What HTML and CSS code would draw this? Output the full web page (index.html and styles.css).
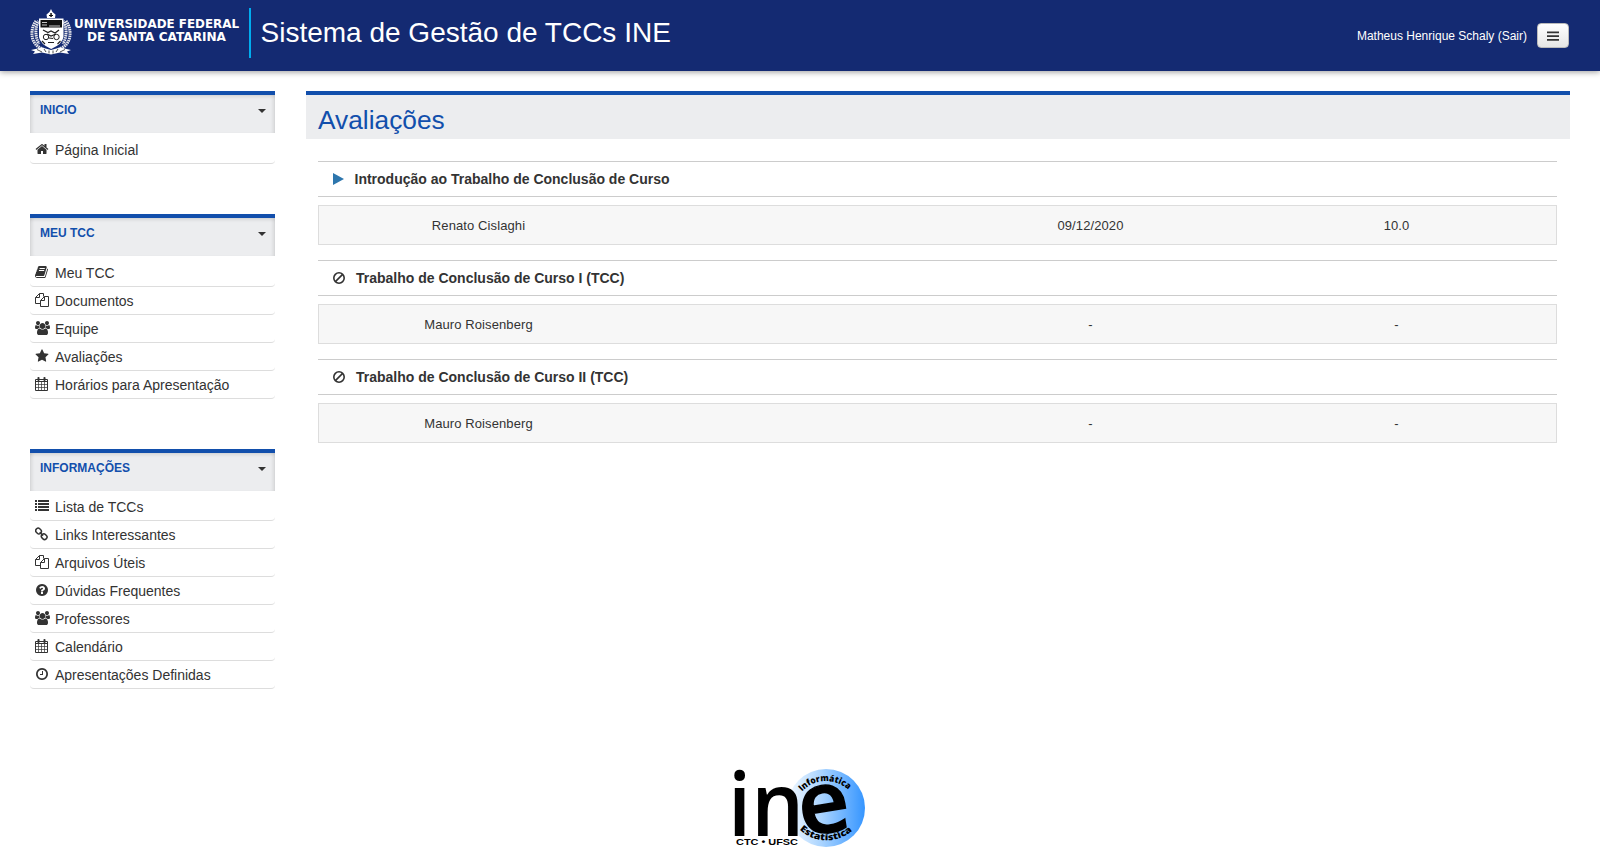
FILE: index.html
```html
<!DOCTYPE html>
<html lang="pt-BR">
<head>
<meta charset="utf-8">
<title>Sistema de Gestão de TCCs INE</title>
<link rel="stylesheet" href="styles.css">
</head>
<body>
<svg class="sprite" width="0" height="0" aria-hidden="true">
  <symbol id="home" viewBox="0 0 1792 1792"><path d="M1472 992v480q0 26-19 45t-45 19h-384v-384h-256v384h-384q-26 0-45-19t-19-45v-480q0-1 .5-3t.5-3l575-474 575 474q1 2 1 6zm223-69l-62 74q-8 9-21 11h-3q-13 0-21-7l-692-577-692 577q-12 8-24 7-13-2-21-11l-62-74q-8-10-7-23.5t11-21.5l719-599q32-26 76-26t76 26l244 204v-195q0-14 9-23t23-9h192q14 0 23 9t9 23v408l219 182q10 8 11 21.5t-7 23.5z"/></symbol>
  <symbol id="book" viewBox="0 0 1792 1792"><path d="M1639 478q40 57 18 129l-275 906q-19 64-76.5 107.5t-122.5 43.5h-923q-77 0-148.5-53.5t-99.5-131.5q-24-67-2-127 0-4 3-27t4-37q1-8-3-21.5t-3-19.5q2-11 8-21t16.5-23.5 16.5-23.5q23-38 45-91.5t30-91.5q3-10 .5-30t-.5-28q3-11 17-28t17-23q21-36 42-92t25-90q1-9-2.5-32t.5-28q4-13 22-30.5t22-22.5q19-26 42.5-84.5t27.5-96.5q1-8-3-25.5t-2-26.5q2-8 9-18t18-23 17-21q8-12 16.5-30.5t15-35 16-36 19.5-32 26.5-23.5 36-11.5 47.5 5.5l-1 3q38-9 51-9h761q74 0 114 56t18 130l-274 906q-36 119-71.5 153.5t-128.5 34.5h-869q-27 0-38 15-11 16-1 43 24 70 144 70h923q29 0 56-15.5t35-41.5l300-987q7-22 5-57 38 15 59 43zm-1064 2q-4 13 2 22.5t20 9.5h608q13 0 25.5-9.5t16.5-22.5l21-64q4-13-2-22.5t-20-9.5h-608q-13 0-25.5 9.5t-16.5 22.5zm-83 256q-4 13 2 22.5t20 9.5h608q13 0 25.5-9.5t16.5-22.5l21-64q4-13-2-22.5t-20-9.5h-608q-13 0-25.5 9.5t-16.5 22.5z"/></symbol>
  <symbol id="files" viewBox="0 0 14 14"><path fill="none" stroke="currentColor" d="M5.5 10.5h-5v-6l4-4h4v3M4.500.5v4h-4M9.500 3.500h4v10h-8v-6zM9.500 3.500v4h-4"/></symbol>
  <symbol id="group" viewBox="0 0 1920 1792"><path d="M593 896q-162 5-265 128h-134q-82 0-138-40.500t-56-118.500q0-353 124-353 6 0 43.500 21t97.500 42.500 119 21.500q67 0 133-23-5 37-5 66 0 139 81 256zm1071 637q0 120-73 189.500t-194 69.500h-874q-121 0-194-69.500t-73-189.500q0-53 3.500-103.500t14-109 26.500-108.500 43-97.500 62-81 85.500-53.500 111.500-20q10 0 43 21.500t73 48 107 48 135 21.500 135-21.500 107-48 73-48 43-21.500q61 0 111.500 20t85.500 53.500 62 81 43 97.500 26.500 108.500 14 109 3.500 103.500zm-1024-1277q0 106-75 181t-181 75-181-75-75-181 75-181 181-75 181 75 75 181zm704 384q0 159-112.500 271.500t-271.500 112.500-271.500-112.500-112.500-271.500 112.500-271.500 271.500-112.500 271.500 112.500 112.500 271.500zm576 225q0 78-56 118.500t-138 40.500h-134q-103-123-265-128 81-117 81-256 0-29-5-66 66 23 133 23 59 0 119-21.500t97.500-42.500 43.500-21q124 0 124 353zm-128-609q0 106-75 181t-181 75-181-75-75-181 75-181 181-75 181 75 75 181z"/></symbol>
  <symbol id="star" viewBox="0 0 1792 1792"><path d="M1728 647q0 22-26 48l-363 354 86 500q1 7 1 20 0 21-10.500 35.500t-30.500 14.500q-19 0-40-12l-449-236-449 236q-22 12-40 12-21 0-31.500-14.500t-10.500-35.500q0-6 2-20l86-500-364-354q-25-27-25-48 0-37 56-46l502-73 225-455q19-41 49-41t49 41l225 455 502 73q56 9 56 46z"/></symbol>
  <symbol id="calendar" viewBox="0 0 14 14"><path fill="none" stroke="currentColor" d="M.5 2.500h12v11h-12zM.5 4.500h12"/><path fill="none" stroke="currentColor" stroke-width=".7" d="M.5 7.500h12M.5 10.500h12M3.500 5v9M6.500 5v9M9.500 5v9"/><rect x="2.500" width="2" height="4" rx=".8"/><rect x="8.500" width="2" height="4" rx=".8"/></symbol>
  <symbol id="list" viewBox="0 0 14 14"><path d="M0 1h2v2H0zM0 4h2v2H0zM0 7h2v2H0zM0 10h2v2H0zM3 1h11v2H3zM3 4h11v2H3zM3 7h11v2H3zM3 10h11v2H3z"/></symbol>
  <symbol id="link" viewBox="0 0 14 14"><g fill="none" stroke="currentColor" stroke-width="1.500" transform="rotate(45 6.500 7)"><rect x="-.6" y="4.600" width="5.800" height="4.800" rx="2.200"/><rect x="7.400" y="4.600" width="5.800" height="4.800" rx="2.200"/><path d="M4 7h4.800"/></g></symbol>
  <symbol id="question" viewBox="0 0 1792 1792"><path d="M1024 1376v-192q0-14-9-23t-23-9h-192q-14 0-23 9t-9 23v192q0 14 9 23t23 9h192q14 0 23-9t9-23zm256-672q0-88-55.500-163t-138.500-116-170-41q-243 0-371 213-15 24 8 42l132 100q7 6 19 6 16 0 25-12 53-68 86-92 34-24 86-24 48 0 85.500 26t37.500 59q0 38-20 61t-68 45q-63 28-115.500 86.500t-52.500 125.500v36q0 14 9 23t23 9h192q14 0 23-9t9-23q0-19 21.500-49.500t54.500-49.500q32-18 49-28.500t46-35 44.500-48 28-60.500 12.500-81zm384 192q0 209-103 385.500t-279.500 279.500-385.500 103-385.500-103-279.500-279.500-103-385.500 103-385.500 279.500-279.500 385.500-103 385.500 103 279.500 279.500 103 385.500z"/></symbol>
  <symbol id="clock" viewBox="0 0 1792 1792"><path d="M1024 544v448q0 14-9 23t-23 9h-320q-14 0-23-9t-9-23v-64q0-14 9-23t23-9h224v-352q0-14 9-23t23-9h64q14 0 23 9t9 23zm416 352q0-148-73-273t-198-198-273-73-273 73-198 198-73 273 73 273 198 198 273 73 273-73 198-198 73-273zm224 0q0 209-103 385.500t-279.500 279.500-385.500 103-385.500-103-279.500-279.500-103-385.500 103-385.500 279.500-279.500 385.500-103 385.500 103 279.500 279.500 103 385.500z"/></symbol>
  <symbol id="ban" viewBox="0 0 12 12"><g fill="none" stroke="currentColor" stroke-width="1.600"><circle cx="6" cy="6" r="5.200"/><path d="M2.400 9.600l7.200-7.200"/></g></symbol>
</svg>

<header class="topbar">
  <svg class="crest" width="42" height="46" viewBox="0 0 42 46">
    <g fill="none" stroke="#e8e8ec" stroke-dasharray="1.500 .7">
      <path stroke-width="3" d="M6 12C1 18 1 28 4 33s6 6 9 7M36 12c5 6 5 16 2 21s-6 6-9 7"/>
      <path stroke-width="3" stroke-dashoffset="1" d="M8.500 12C5 18 5 28 9 35M33.500 12c3.500 6 3.500 16-.5 23"/>
    </g>
    <path fill="#fff" d="M21 0l1.500 3 3 2.500L25 9h-8l-.5-3.500 3-2.500zM9 9.500h24.500V28q-1 7-12.300 12Q10 35 9 28zM1 41l11-2.500 9 2.500 9-2.500L41 41l-4 1.500 2 2.500-9-1.500-9 2-9-2L3 45l2-2.500z"/>
    <path fill="#111" d="M20.300 4h1.500v4h-1.500zM19 6h4v1h-4zM10.500 11H32v7.500H10.500z"/>
    <path fill="none" stroke="#ddd" stroke-width=".9" d="M12 13.500h5M12 16h5M19 17h11"/>
    <g fill="none" stroke="#222">
      <path stroke-width="1.300" d="M13 21l5 2.500 3-1.500 4 2 4-3"/>
      <circle cx="16" cy="28" r="2.700"/><circle cx="26.500" cy="28" r="2.700"/>
      <path stroke-width="1.200" d="M17 25l4 2 5-2M19 29l4 .5M18 33.500h6M12 32l3 3M30.500 32l-3 3"/>
      <path stroke-width=".8" d="M7 40.500l5 2.500M14 40l2 3M19 41.500v3M23 41.500v3M28 40l-2 3M35 40.500L30 43"/>
    </g>
  </svg>
  <svg class="university" width="166" height="32" viewBox="0 0 166 32">
    <text x="0" y="14" textLength="165" lengthAdjust="spacingAndGlyphs">UNIVERSIDADE FEDERAL</text>
    <text x="13" y="26.500" textLength="139" lengthAdjust="spacingAndGlyphs">DE SANTA CATARINA</text>
  </svg>
  <h1 class="system">Sistema de Gestão de TCCs INE</h1>
  <a class="user">Matheus Henrique Schaly (Sair)</a>
  <button class="menu-button" aria-label="Menu"><svg width="12" height="10" viewBox="0 0 12 10"><path d="M0 .5h12v1.700H0zM0 4.200h12v1.700H0zM0 8h12v1.700H0z"/></svg></button>
</header>

<div class="page">
  <nav class="sidebar">
    <section class="box">
      <h2 class="box-title">INICIO<i class="caret"></i></h2>
      <ul class="links">
        <li><svg class="icon"><use href="#home"/></svg>Página Inicial</li>
      </ul>
    </section>
    <section class="box">
      <h2 class="box-title">MEU TCC<i class="caret"></i></h2>
      <ul class="links">
        <li><svg class="icon"><use href="#book"/></svg>Meu TCC</li>
        <li><svg class="icon"><use href="#files"/></svg>Documentos</li>
        <li><svg class="icon wide"><use href="#group"/></svg>Equipe</li>
        <li><svg class="icon"><use href="#star"/></svg>Avaliações</li>
        <li><svg class="icon"><use href="#calendar"/></svg>Horários para Apresentação</li>
      </ul>
    </section>
    <section class="box">
      <h2 class="box-title">INFORMAÇÕES<i class="caret"></i></h2>
      <ul class="links tight">
        <li><svg class="icon"><use href="#list"/></svg>Lista de TCCs</li>
        <li><svg class="icon"><use href="#link"/></svg>Links Interessantes</li>
        <li><svg class="icon"><use href="#files"/></svg>Arquivos Úteis</li>
        <li><svg class="icon"><use href="#question"/></svg>Dúvidas Frequentes</li>
        <li><svg class="icon wide"><use href="#group"/></svg>Professores</li>
        <li><svg class="icon"><use href="#calendar"/></svg>Calendário</li>
        <li><svg class="icon"><use href="#clock"/></svg>Apresentações Definidas</li>
      </ul>
    </section>
  </nav>

  <main class="content">
    <h2 class="content-title">Avaliações</h2>
    <div class="stages">
      <section class="stage">
        <h3 class="stage-title"><svg class="play" width="11" height="12" viewBox="0 0 11 12"><path d="M0 0l11 6-11 6z"/></svg>Introdução ao Trabalho de Conclusão de Curso</h3>
        <div class="grade"><span>Renato Cislaghi</span><span></span><span>09/12/2020</span><span>10.0</span></div>
      </section>
      <section class="stage">
        <h3 class="stage-title"><svg class="ban" width="12" height="12"><use href="#ban"/></svg>Trabalho de Conclusão de Curso I (TCC)</h3>
        <div class="grade"><span>Mauro Roisenberg</span><span></span><span>-</span><span>-</span></div>
      </section>
      <section class="stage">
        <h3 class="stage-title"><svg class="ban" width="12" height="12"><use href="#ban"/></svg>Trabalho de Conclusão de Curso II (TCC)</h3>
        <div class="grade"><span>Mauro Roisenberg</span><span></span><span>-</span><span>-</span></div>
      </section>
    </div>
  </main>
</div>

<footer class="footer">
  <svg width="160" height="106" viewBox="0 0 160 106">
    <defs>
      <linearGradient id="globe"><stop offset="0" stop-color="#f4faff"/><stop offset=".45" stop-color="#a8d3ff"/><stop offset="1" stop-color="#3595ff"/></linearGradient>
      <path id="arc-top" d="M82 36.500A33 33 0 0 1 128 34.500"/>
      <path id="arc-bottom" d="M79.500 74.500A39 39 0 0 0 133 75"/>
    </defs>
    <circle cx="106" cy="53" r="39" fill="url(#globe)"/>
    <text class="ine" x="8" y="80.500" textLength="76" lengthAdjust="spacingAndGlyphs">in</text>
    <text class="ine-e" transform="rotate(-9 104 54)" x="78.500" y="77.500" textLength="51" lengthAdjust="spacingAndGlyphs">e</text>
    <text class="ine-small" x="16" y="90" textLength="62" lengthAdjust="spacingAndGlyphs">CTC • UFSC</text>
    <text class="ine-arc"><textPath href="#arc-top" textLength="51" lengthAdjust="spacingAndGlyphs">Informática</textPath></text>
    <text class="ine-arc"><textPath href="#arc-bottom" textLength="58" lengthAdjust="spacingAndGlyphs">Estatística</textPath></text>
  </svg>
</footer>
</body>
</html>
```
FILE: styles.css
```css
* { box-sizing: border-box; }
body { margin: 0; height: 861px; overflow: hidden; display: flex; flex-direction: column; background: #fff; color: #333; font: 14px/20px "Liberation Sans", Arial, sans-serif; }
h1, h2, h3, ul { margin: 0; padding: 0; font-weight: normal; }
ul { list-style: none; }
svg { display: block; flex: none; fill: currentColor; }
.sprite { position: absolute; }

.topbar { display: flex; align-items: flex-start; height: 71px; padding: 8px 31px 0 30px; background: #142a72; color: #fff; box-shadow: 0 1px 6px rgba(0, 0, 0, .4); flex: none; }
.crest { margin-top: 1px; }
.university { margin: 6px 9px 0 2px; fill: #fff; font: bold 11.600px "DejaVu Sans", Verdana, sans-serif; }
.system { height: 50px; padding: 9px 0 0 9.500px; border-left: 2px solid #00adef; font-size: 28px; line-height: 32px; white-space: nowrap; }
.user { margin: 18px 10px 0 auto; font-size: 12px; }
.menu-button { display: flex; align-items: center; justify-content: center; width: 32px; height: 25px; margin-top: 15px; padding: 0; border: 1px solid #bbb; border-radius: 4px; background: linear-gradient(#fff, #e6e6e6); color: #333; }

.page { display: flex; gap: 31px; padding: 20px 30px 0; flex: 1; }
.sidebar { width: 245px; display: flex; flex-direction: column; gap: 50px; }
.box-title { display: flex; justify-content: space-between; height: 42px; padding: 5px 9.500px 0 10px; border-top: 4px solid #124fac; background: #ecedef; box-shadow: inset 4px 0 4px -3px rgba(0, 0, 0, .14), inset -4px 0 4px -3px rgba(0, 0, 0, .14), inset 0 4px 4px -3px rgba(0, 0, 0, .14); color: #124fac; font-size: 12px; font-weight: bold; }
.caret { height: 4px; margin-top: 9px; border: 4px solid transparent; border-top-color: #333; border-bottom: 0; }
.links { padding-top: 3px; }
.links.tight { padding-top: 2px; }
.links li { display: flex; align-items: center; height: 28px; padding: 1px 0 0 5px; border-bottom: 1px solid #ddd; border-radius: 4px; white-space: nowrap; }
.icon { width: 14px; height: 14px; margin: -2px 6px 0 0; }
.icon.wide { width: 15px; margin-right: 5px; }

.content { flex: 1; }
.content-title { height: 48px; padding: 9px 12px 0; border-top: 4px solid #124fac; background: #ecedef; color: #124fac; font-size: 26.300px; line-height: 32px; }
.stages { display: flex; flex-direction: column; gap: 15px; padding: 22px 13px 0 12px; }
.stage-title { display: flex; align-items: center; height: 36px; margin-bottom: 8px; padding-left: 15px; border: 1px solid #ccc; border-width: 1px 0; font-size: 14px; font-weight: bold; }
.play { margin-right: 10.500px; color: #2d76ad; }
.ban { margin-right: 11px; }
.grade { display: grid; grid-template-columns: repeat(4, 306px); justify-content: center; align-items: center; height: 40px; padding-top: 1px; border: 1px solid #ddd; background: #f7f7f7; text-align: center; font-size: 13px; letter-spacing: .1px; }

.footer { display: flex; justify-content: center; height: 106px; flex: none; }
.footer text { fill: #000; }
.ine { font: 600 88px "Open Sans", sans-serif; }
.ine-e { font: 600 86px "Open Sans", sans-serif; stroke: #000; stroke-width: 1.500px; }
.ine-small { font: bold 9.800px "Liberation Sans", sans-serif; }
.ine-arc { font: 800 9px "Open Sans", sans-serif; }
```
